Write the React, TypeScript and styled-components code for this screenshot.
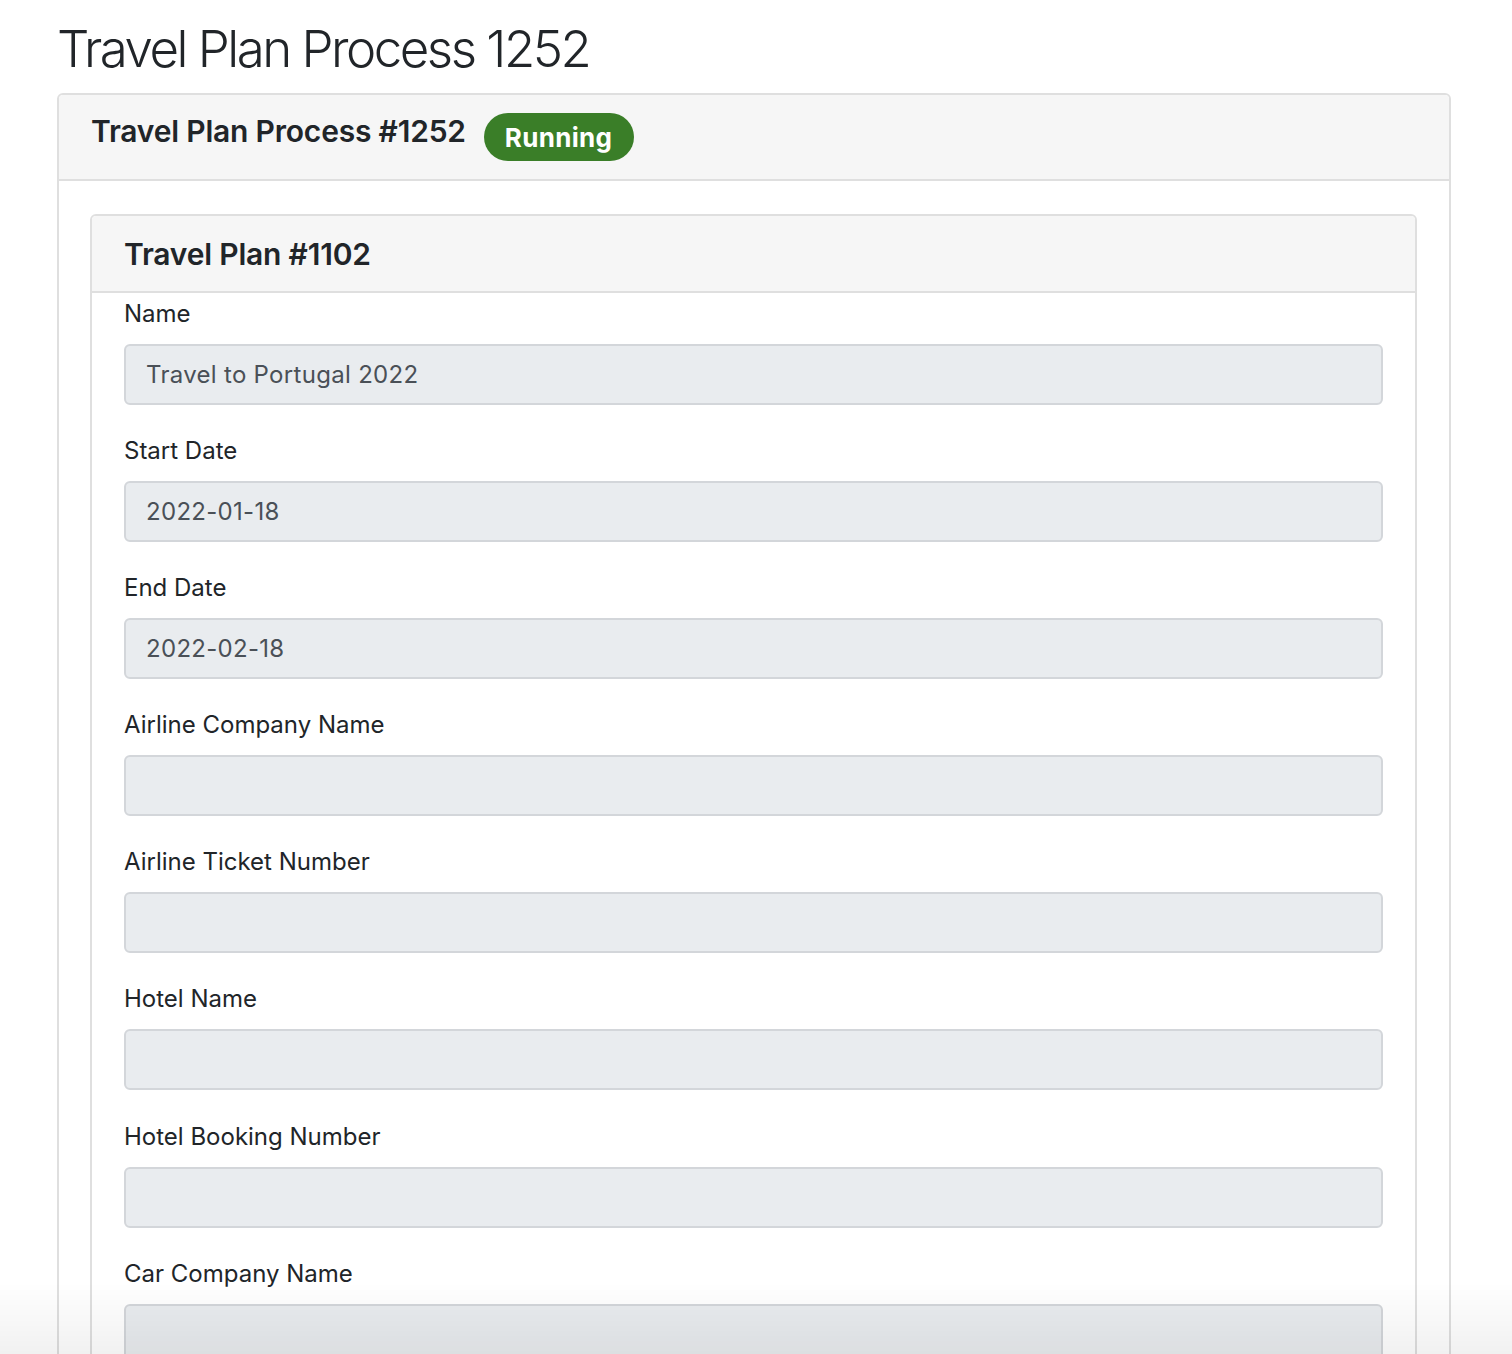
import React from 'react';
import styled, { createGlobalStyle } from 'styled-components';

const GlobalStyle = createGlobalStyle`
  html, body { margin: 0; padding: 0; background: #ffffff; }
  body {
    font-family: Inter, "Noto Sans", "Liberation Sans", sans-serif;
    color: #212529;
    -webkit-font-smoothing: antialiased;
  }
  * { box-sizing: border-box; }
`;

const Page = styled.main`
  padding: 0 61px 40px 57px;
`;

const PageTitle = styled.h1`
  margin: 18px 0 13px;
  font-size: 51px;
  font-weight: 300;
  line-height: 62px;
  letter-spacing: -2.5px;
  color: #212529;
`;

const Card = styled.section`
  border: 2px solid #dfdfdf;
  border-radius: 6px;
  background: #ffffff;
  overflow: hidden;
`;

const CardHeader = styled.header<{ height: number }>`
  display: flex;
  align-items: center;
  gap: 18px;
  height: ${({ height }) => height}px;
  padding: 0 33px 0 32px;
  background: #f6f6f6;
  border-bottom: 2px solid #dfdfdf;
`;

const HeaderTitle = styled.h5<{ lift?: number }>`
  margin: 0 0 ${({ lift }) => lift || 0}px;
  font-size: 30px;
  font-weight: 600;
  line-height: 36px;
  letter-spacing: -0.2px;
  color: #212529;
`;

const StatusBadge = styled.span`
  display: inline-flex;
  align-items: center;
  justify-content: center;
  height: 48px;
  padding: 0 22px 0 21px;
  border-radius: 24px;
  background: #3a7e28;
  color: #ffffff;
  font-size: 26px;
  font-weight: 700;
  letter-spacing: 0.3px;
`;

const OuterBody = styled.div`
  padding: 33px 32px 0 31px;
`;

const FormBody = styled.div`
  padding: 4px 32px 0;
`;

const FieldGroup = styled.div`
  display: flex;
  flex-direction: column;
  margin-bottom: 29.1px;
`;

const FieldLabel = styled.label`
  font-size: 24px;
  line-height: 34px;
  margin-bottom: 13px;
  color: #212529;
`;

const FieldInput = styled.input`
  height: 61px;
  width: 100%;
  padding: 0 20px;
  border: 2px solid #d3d6da;
  border-radius: 6px;
  background: #e9ecef;
  font-family: inherit;
  font-size: 24px;
  letter-spacing: 0.3px;
  color: #4a5057;
  outline: none;
`;

const BottomFade = styled.div`
  position: fixed;
  left: 0;
  right: 0;
  bottom: 0;
  height: 72px;
  pointer-events: none;
  background: linear-gradient(to bottom, rgba(0, 0, 0, 0), rgba(0, 0, 0, 0.055));
`;

const fields = [
  { label: 'Name', value: 'Travel to Portugal 2022' },
  { label: 'Start Date', value: '2022-01-18' },
  { label: 'End Date', value: '2022-02-18' },
  { label: 'Airline Company Name', value: '' },
  { label: 'Airline Ticket Number', value: '' },
  { label: 'Hotel Name', value: '' },
  { label: 'Hotel Booking Number', value: '' },
  { label: 'Car Company Name', value: '' },
  { label: 'Car Booking Number', value: '' },
];

const App = () => (
  <>
    <GlobalStyle />
    <Page>
      <PageTitle>Travel Plan Process 1252</PageTitle>
      <Card>
        <CardHeader height={86}>
          <HeaderTitle lift={13}>Travel Plan Process #1252</HeaderTitle>
          <StatusBadge>Running</StatusBadge>
        </CardHeader>
        <OuterBody>
          <Card>
            <CardHeader height={77}>
              <HeaderTitle>Travel Plan #1102</HeaderTitle>
            </CardHeader>
            <FormBody>
              {fields.map((f) => (
                <FieldGroup key={f.label}>
                  <FieldLabel>{f.label}</FieldLabel>
                  <FieldInput type="text" value={f.value} disabled readOnly />
                </FieldGroup>
              ))}
            </FormBody>
          </Card>
        </OuterBody>
      </Card>
    </Page>
    <BottomFade />
  </>
);

export default App;
